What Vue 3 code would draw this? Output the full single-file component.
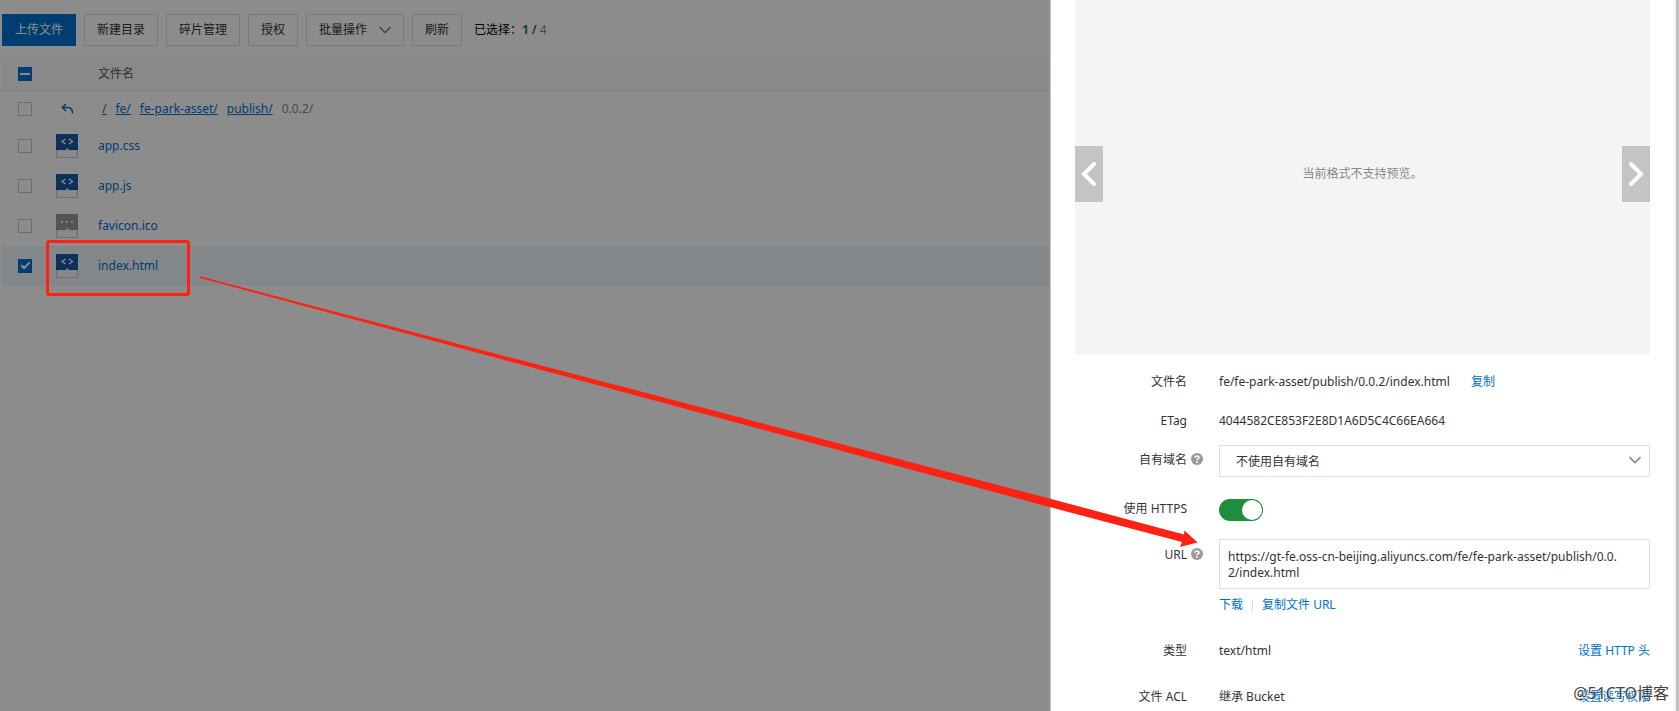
<template>
  <div class="page">
    <main class="browser">
      <div class="toolbar">
        <button type="button" class="btn btn-primary">上传文件</button>
        <button type="button" class="btn">新建目录</button>
        <button type="button" class="btn">碎片管理</button>
        <button type="button" class="btn">授权</button>
        <button type="button" class="btn btn-menu">
          批量操作
          <svg width="12" height="8" viewBox="0 0 12 8" aria-hidden="true">
            <path d="M0.500 1L6 6.500 11.500 1" fill="none" stroke="#888" stroke-width="1.600" />
          </svg>
        </button>
        <button type="button" class="btn">刷新</button>
        <p class="selected">已选择：<b>{{ selectedCount }}</b> / <span>{{ files.length }}</span></p>
      </div>

      <table class="files">
        <thead>
          <tr>
            <th class="col-check">
              <input type="checkbox" class="check check-some" aria-label="全选" />
            </th>
            <th class="col-icon"></th>
            <th>文件名</th>
          </tr>
        </thead>
        <tbody>
          <tr class="crumb-row">
            <td class="col-check"><input type="checkbox" class="check" aria-label="上级目录" disabled /></td>
            <td class="col-icon">
              <a href="#" class="back" aria-label="返回上级">
                <svg width="14" height="12" viewBox="0 0 14 12">
                  <path d="M5 1L1.300 4.500 5 8M1.500 4.500h5.500c3 0 4.500 2 4.500 6" fill="none" stroke="#0064c8" stroke-width="1.400" />
                </svg>
              </a>
            </td>
            <td>
              <nav class="crumbs">
                <a v-for="crumb in crumbs" :key="crumb" href="#">{{ crumb }}</a>
                <span>0.0.2/</span>
              </nav>
            </td>
          </tr>
          <tr v-for="file in files" :key="file.name" :class="{ active: file.checked }">
            <td class="col-check">
              <input v-model="file.checked" type="checkbox" class="check" :aria-label="file.name" />
            </td>
            <td class="col-icon">
              <svg class="file-icon" width="22" height="24" viewBox="0 0 22 24" aria-hidden="true">
                <rect x="0.5" y="0.5" width="21" height="23" fill="#f7f7f7" stroke="#c8c8c8" />
                <rect width="22" height="16" :fill="file.code ? '#1a5aa8' : '#999'" />
                <path d="M9.500 16l1.700-2 1.700 2z" fill="#f7f7f7" />
                <path v-if="file.code" d="M9.500 5L6 7.500 9.500 10M13 5l3.500 2.500L13 10" fill="none" stroke="#fff" stroke-width="1.200" />
                <path v-else d="M5 7h2v2H5zM10 7h2v2h-2zM15 7h2v2h-2z" fill="#e8e8e8" />
              </svg>
            </td>
            <td><a href="#">{{ file.name }}</a></td>
          </tr>
        </tbody>
      </table>
    </main>

    <div class="mask"></div>

    <aside class="drawer">
      <div class="drawer-body">
        <div class="preview">
          <button type="button" class="arrow" aria-label="上一个">
            <svg width="16" height="26" viewBox="0 0 16 26">
              <path d="M13 3L3 13l10 10" fill="none" stroke="#fff" stroke-width="4" stroke-linecap="round" />
            </svg>
          </button>
          <p>当前格式不支持预览。</p>
          <button type="button" class="arrow" aria-label="下一个">
            <svg width="16" height="26" viewBox="0 0 16 26">
              <path d="M3 3l10 10L3 23" fill="none" stroke="#fff" stroke-width="4" stroke-linecap="round" />
            </svg>
          </button>
        </div>

        <div class="detail">
          <div class="row">
            <span class="label">文件名</span>
            <div class="value">fe/fe-park-asset/publish/0.0.2/index.html <a href="#" class="copy">复制</a></div>
          </div>
          <div class="row">
            <span class="label">ETag</span>
            <div class="value">4044582CE853F2E8D1A6D5C4C66EA664</div>
          </div>
          <div class="row row-domain">
            <label class="label" for="domain">自有域名</label>
            <HelpIcon class="help" />
            <div class="value select-box">
              <select id="domain">
                <option>不使用自有域名</option>
              </select>
              <svg class="select-arrow" width="12" height="8" viewBox="0 0 12 8" aria-hidden="true">
                <path d="M0.500 1L6 6.500 11.500 1" fill="none" stroke="#888" stroke-width="1.600" />
              </svg>
            </div>
          </div>
          <div class="row row-https">
            <label class="label" for="https">使用 HTTPS</label>
            <div class="value">
              <input id="https" v-model="useHttps" type="checkbox" role="switch" class="switch" />
            </div>
          </div>
          <div class="row row-url">
            <label class="label" for="url">URL</label>
            <HelpIcon class="help" />
            <div class="value">
              <textarea id="url" v-model="url" rows="2" readonly spellcheck="false"></textarea>
              <div class="links">
                <a href="#">下载</a>
                <i></i>
                <a href="#">复制文件 URL</a>
              </div>
            </div>
          </div>
          <div class="row row-wide">
            <span class="label">类型</span>
            <div class="value split">text/html <a href="#">设置 HTTP 头</a></div>
          </div>
          <div class="row row-wide">
            <span class="label">文件 ACL</span>
            <div class="value split">继承 Bucket <a href="#">设置读写权限</a></div>
          </div>
        </div>
      </div>
      <div class="scrollbar"></div>
    </aside>

    <svg class="marks" width="1200" height="560" viewBox="0 0 1200 560" aria-hidden="true">
      <rect x="47.500" y="241.500" width="141" height="53" rx="2" fill="none" stroke="#ff2112" stroke-width="3" />
      <path d="M200 276.300L1040 496l144 38.500 .5-4L1197.500 542.500 1180 547l2-5L1040 504.500 200 278z" fill="#ff2112" />
    </svg>

    <div class="watermark">@51CTO博客</div>
  </div>
</template>

<script setup>
import { ref, computed, h } from 'vue'

const crumbs = ['/', 'fe/', 'fe-park-asset/', 'publish/']

const files = ref([
  { name: 'app.css', code: true, checked: false },
  { name: 'app.js', code: true, checked: false },
  { name: 'favicon.ico', code: false, checked: false },
  { name: 'index.html', code: true, checked: true }
])

const selectedCount = computed(() => files.value.filter((f) => f.checked).length)

const useHttps = ref(true)
const url = ref('https://gt-fe.oss-cn-beijing.aliyuncs.com/fe/fe-park-asset/publish/0.0.2/index.html')

const HelpIcon = () =>
  h('svg', { width: 12, height: 12, viewBox: '0 0 12 12' }, [
    h('circle', { cx: 6, cy: 6, r: 6, fill: '#999' }),
    h('path', {
      d: 'M4 4.700C4 2.300 8 2.300 8 4.600 8 6 6 5.800 6 7.300',
      fill: 'none',
      stroke: '#fff',
      'stroke-width': 1.5
    }),
    h('rect', { x: 5.2, y: 8.2, width: 1.6, height: 1.6, fill: '#fff' })
  ])
</script>

<style>
body {
  margin: 0;
  background: #fff;
}
</style>

<style scoped>
.page {
  position: relative;
  min-height: 100vh;
  overflow: hidden;
  background: #fff;
  color: #333;
  font-family: "Noto Sans", "Noto Sans CJK SC", sans-serif;
  font-size: 12px;
  line-height: 16px;
}

button,
select,
textarea {
  font: inherit;
  color: inherit;
}

p {
  margin: 0;
}

a {
  color: #0070cc;
  text-decoration: none;
}

/* file list */
.browser {
  padding: 14px 0 0 2px;
}

.toolbar {
  display: flex;
  align-items: center;
  gap: 8px;
  margin-bottom: 12px;
}

.btn {
  height: 32px;
  padding: 0 12px;
  border: 1px solid #dedede;
  background: #fff;
}

.btn-primary {
  border-color: #0070cc;
  background: #0070cc;
  color: #fff;
}

.btn-menu {
  display: flex;
  align-items: center;
  gap: 12px;
}

.selected {
  margin-left: 4px;
  color: #000;
}

.selected b {
  color: #1e8e3e;
}

.selected span {
  color: #888;
}

.files {
  width: 100%;
  border-collapse: collapse;
}

.files th,
.files td {
  height: 40px;
  padding: 0;
  text-align: left;
  font-weight: normal;
}

.files th {
  height: 32px;
  border-bottom: 1px solid #e8e8e8;
  background: #f9f9f9;
  color: #555;
}

.files .crumb-row td {
  height: 35px;
}

.files .col-check {
  width: 38px;
  padding-left: 16px;
}

.files .col-icon {
  width: 42px;
}

.active {
  background: #f0f6fa;
}

.check {
  display: block;
  width: 14px;
  height: 14px;
  margin: 0;
  appearance: none;
  border: 1px solid #c8c8c8;
  background: #fff;
}

.check-some,
.check:checked {
  position: relative;
  border-color: #0070cc;
  background: #0070cc;
}

.check-some::after {
  content: "";
  position: absolute;
  top: 5px;
  left: 1px;
  width: 10px;
  height: 2px;
  background: #fff;
}

.check:checked::after {
  content: "";
  position: absolute;
  top: 0;
  left: 4px;
  width: 3px;
  height: 7px;
  border: solid #fff;
  border-width: 0 2px 2px 0;
  transform: rotate(45deg);
}

.file-icon {
  display: block;
}

.back {
  display: block;
  padding-left: 5px;
}

.back svg {
  display: block;
}

.crumbs {
  display: flex;
  gap: 9px;
  padding-left: 4px;
  color: #888;
}

.crumbs a {
  text-decoration: underline;
}

.mask {
  position: absolute;
  inset: 0;
  background: rgba(0, 0, 0, 0.45);
}

/* detail drawer */
.drawer {
  position: absolute;
  top: 0;
  right: 0;
  bottom: 0;
  display: flex;
  width: 628px;
  max-width: 100%;
  overflow: hidden;
  background: #fff;
  box-shadow: -1px 0 1px rgba(255, 255, 255, 0.5);
}

.drawer-body {
  flex: 1;
  padding: 0 24px;
}

.scrollbar {
  width: 3px;
  border-left: 2px solid #f0f0f0;
  background: #c1c1c1;
}

.preview {
  display: flex;
  align-items: center;
  justify-content: space-between;
  height: 360px;
  margin-top: -6px;
  background: #f4f4f4;
  color: #888;
}

.arrow {
  display: flex;
  align-items: center;
  justify-content: center;
  width: 28px;
  height: 56px;
  padding: 0;
  border: 0;
  background: #c4c4c4;
}

.detail {
  padding-top: 20px;
}

.row {
  display: flex;
  align-items: flex-start;
  position: relative;
  margin-bottom: 23px;
}

.label {
  width: 112px;
  margin-right: 32px;
  text-align: right;
}

.help {
  position: absolute;
  top: 1px;
  left: 116px;
}

.value {
  flex: 1;
  min-width: 0;
}

.copy {
  margin-left: 18px;
}

.split {
  display: flex;
  justify-content: space-between;
}

.row-domain {
  margin-bottom: 33px;
}

.select-box {
  position: relative;
  margin-top: -7px;
  margin-bottom: -9px;
}

.select-box select {
  display: block;
  width: 100%;
  height: 32px;
  padding: 2px 32px 0 16px;
  appearance: none;
  border: 1px solid #dedede;
  border-radius: 0;
  background: #fff;
}

.select-arrow {
  position: absolute;
  top: 11px;
  right: 9px;
}

.row-https {
  margin-bottom: 30px;
}

.row-https .value {
  margin: -2px 0 -4px;
}

.switch {
  display: block;
  width: 44px;
  height: 22px;
  margin: 0;
  appearance: none;
  border-radius: 11px;
  background: #ccc;
}

.switch::before {
  content: "";
  display: block;
  width: 20px;
  height: 20px;
  margin: 1px;
  border-radius: 50%;
  background: #fff;
}

.switch:checked {
  background: #1e8e3e;
}

.switch:checked::before {
  margin-left: 23px;
}

.row-url {
  margin-bottom: 30px;
}

.row-url .value {
  margin-top: -8px;
}

textarea {
  display: block;
  box-sizing: border-box;
  width: 100%;
  height: 50px;
  padding: 9px 32px 7px 8px;
  overflow: hidden;
  border: 1px solid #dedede;
  background: #fff;
  resize: none;
  word-break: break-all;
}

.links {
  display: flex;
  align-items: center;
  margin-top: 8px;
}

.links i {
  width: 1px;
  height: 12px;
  margin: 0 9px;
  background: #dedede;
}

.row-wide {
  margin-bottom: 30px;
}

/* red frame and pointer over the list */
.marks {
  position: absolute;
  top: 0;
  left: 0;
  pointer-events: none;
}

.watermark {
  position: absolute;
  right: 10px;
  bottom: 6px;
  color: #444;
  font-size: 16px;
  line-height: 24px;
  text-shadow: 1px 1px 0 rgba(255, 255, 255, 0.7);
}
</style>
